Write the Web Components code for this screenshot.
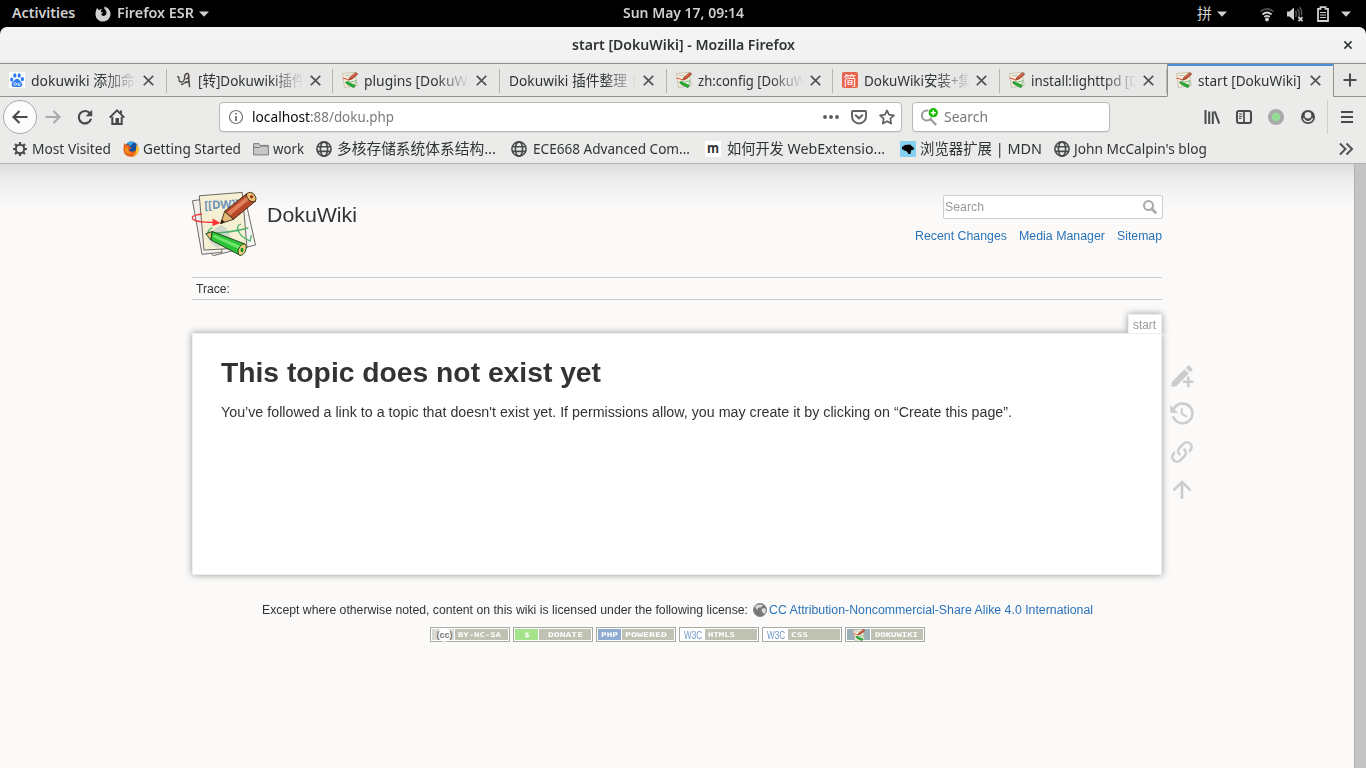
<!DOCTYPE html>
<html lang="en">
<head>
<meta charset="utf-8">
<title>start [DokuWiki]</title>
<style>
html,body{margin:0;height:100%;overflow:hidden;background:#000}
body{font-family:"Liberation Sans",Arial,sans-serif}
</style>
</head>
<body>
<desk-top></desk-top>

<template id="t-desktop">
<style>
:host{display:grid;grid-template-rows:27px 36px 34px 40px 27px 604px;width:1366px;height:768px;overflow:hidden}
</style>
<gnome-bar></gnome-bar>
<window-title></window-title>
<tab-strip></tab-strip>
<nav-bar></nav-bar>
<bookmark-bar></bookmark-bar>
<wiki-view></wiki-view>
</template>

<template id="t-gnome">
<style>
:host{display:grid;grid-template-columns:1fr auto 1fr;align-items:center;background:#000;color:#d0d0cf;font:600 14.2px/26px "Noto Sans","Noto Sans CJK SC",sans-serif}
div{display:flex;align-items:center;height:27px}
fit-text{margin-bottom:1px}
.l{padding-left:12px}.l ui-icon:first-of-type{margin:0 6px 0 20px}.l ui-icon:last-of-type{margin-left:5px}
.r{justify-content:flex-end;padding-right:15px}
.r fit-text{font-weight:400;font-size:15px}
</style>
<div class="l"><fit-text w="63">Activities</fit-text><ui-icon name="foxmono"></ui-icon><fit-text w="77">Firefox ESR</fit-text><ui-icon name="caret" w="10" h="6"></ui-icon></div>
<fit-text w="121">Sun May 17, 09:14</fit-text>
<div class="r"><fit-text w="15">拼</fit-text><ui-icon name="caret" w="10" h="6" style="margin:0 32px 0 5px"></ui-icon><ui-icon name="wifi"></ui-icon><ui-icon name="volume" style="margin:0 12px"></ui-icon><ui-icon name="battery"></ui-icon><ui-icon name="caret" w="10" h="6" style="margin-left:10px"></ui-icon></div>
</template>

<template id="t-title">
<style>
:host{display:grid;grid-template-columns:1fr auto 1fr;align-items:center;background:linear-gradient(#f4f4f4,#f2f2f1 33px,#e4e4e2);border-radius:7px 7px 0 0;color:#2e3436;font:600 14.4px/36px "Noto Sans",sans-serif}
ui-icon{justify-self:end;margin-right:14px}
</style>
<span></span><fit-text w="223">start [DokuWiki] - Mozilla Firefox</fit-text><ui-icon name="x" w="8" h="8" style="--sw:3.4"></ui-icon>
</template>

<template id="t-tabs">
<style>
:host{display:grid;grid-template-columns:repeat(8,166.67px) 1fr;box-sizing:border-box;height:34px;border-top:1px solid #8f918e;background:#e7e7e6}
.plus{display:flex;align-items:center;justify-content:center;border-bottom:1px solid #8f918e;border-left:1px solid #8f918e;color:#474b4c;margin-left:-.5px}
</style>
<browser-tab icon="baidu" w="104" label="dokuwiki 添加命"></browser-tab>
<browser-tab icon="scrawl" w="107.500" label="[转]Dokuwiki插件"></browser-tab>
<browser-tab icon="dokusmall" w="107" label="plugins [DokuWi"></browser-tab>
<browser-tab w="129" label="Dokuwiki 插件整理 |"></browser-tab>
<browser-tab icon="dokusmall" w="108" label="zh:config [DokuW"></browser-tab>
<browser-tab icon="jian" w="108" label="DokuWiki安装+集"></browser-tab>
<browser-tab icon="dokusmall" w="108" label="install:lighttpd [D"></browser-tab>
<browser-tab icon="dokusmall" w="103" label="start [DokuWiki]" active></browser-tab>
<div class="plus"><ui-icon name="plus"></ui-icon></div>
</template>

<template id="t-nav">
<style>
:host{display:flex;align-items:center;background:#ebebea;color:#474b4c;font:14.6px/26px "Noto Sans",sans-serif}
.b{display:flex;width:32px;height:32px;align-items:center;justify-content:center}
.back{box-sizing:border-box;width:34px;height:34px;border:1px solid #a8a9a7;border-radius:50%;background:#fcfcfc;margin:0 0 0 3px}
.f{display:flex;align-items:center;box-sizing:border-box;height:30px;background:#fff;border:1px solid #b8b8b5;border-radius:4px;box-shadow:0 1px 1px #0001}
.f fit-text{margin-bottom:2px}
.url{width:683px;margin-left:86px;padding:0 6px 0 8px}
.url fit-text:nth-of-type(1){color:#0c0c0d}.url fit-text:nth-of-type(2){color:#7b7b7c}
.q{width:198px;margin:0 86px 0 10px;padding-left:7px;color:#777}
.sep{width:1px;height:34px;background:#cecfcd;margin:0 3px}
</style>
<div class="b back"><ui-icon name="back"></ui-icon></div>
<div class="b" style="color:#a9aaaa"><ui-icon name="fwd"></ui-icon></div>
<div class="b"><ui-icon name="reload"></ui-icon></div>
<div class="b"><ui-icon name="home"></ui-icon></div>
<div class="f url"><ui-icon name="info" style="color:#737373;margin-right:8px"></ui-icon><fit-text w="58">localhost</fit-text><fit-text w="84">:88/doku.php</fit-text><span style="flex:1"></span><ui-icon name="dots"></ui-icon><ui-icon name="pocket" style="margin:0 12px"></ui-icon><ui-icon name="star"></ui-icon></div>
<div class="f q"><ui-icon name="searchadd" w="18" h="18" style="margin-right:6px"></ui-icon><fit-text w="44">Search</fit-text></div>
<div class="b"><ui-icon name="library"></ui-icon></div>
<div class="b"><ui-icon name="sidebar"></ui-icon></div>
<div class="b"><ui-icon name="dot"></ui-icon></div>
<div class="b"><ui-icon name="account"></ui-icon></div>
<div class="sep"></div>
<div class="b"><ui-icon name="menu"></ui-icon></div>
</template>

<template id="t-bookmarks">
<style>
:host{display:flex;align-items:center;box-sizing:border-box;height:27px;padding:0 12px 3px;background:#ebebea;border-bottom:1px solid #b4b5b2;color:#2e3436;font:14.67px/22px "Noto Sans","Noto Sans CJK SC",sans-serif}
.i{display:flex;align-items:center;gap:4px;margin-right:12px}
.i fit-text{margin-bottom:1px}
.n{gap:6px;margin-right:15px}
.i ui-icon{color:#474b4c}
</style>
<div class="i"><ui-icon name="gear"></ui-icon><fit-text w="79">Most Visited</fit-text></div>
<div class="i"><ui-icon name="firefox"></ui-icon><fit-text w="98">Getting Started</fit-text></div>
<div class="i"><ui-icon name="folder"></ui-icon><fit-text w="31">work</fit-text></div>
<div class="i n" style="gap:5px"><ui-icon name="globe"></ui-icon><fit-text w="159">多核存储系统体系结构...</fit-text></div>
<div class="i n"><ui-icon name="globe"></ui-icon><fit-text w="157">ECE668 Advanced Com...</fit-text></div>
<div class="i n"><ui-icon name="m"></ui-icon><fit-text w="158">如何开发 WebExtensio...</fit-text></div>
<div class="i"><ui-icon name="mdn"></ui-icon><fit-text w="122">浏览器扩展 | MDN</fit-text></div>
<div class="i"><ui-icon name="globe"></ui-icon><fit-text w="133">John McCalpin's blog</fit-text></div>
<span style="flex:1"></span><ui-icon name="more"></ui-icon>
</template>

<template id="t-wiki">
<style>
:host{display:grid;grid-template-columns:1354px 12px;background:#fbfaf9;color:#333}
main{background:linear-gradient(#ddd,#eee 17px,#fbfaf9 46px);padding:28px 192px 0;height:576px}
.bar{background:#c3c4c3;border-left:1px solid #aeb0ad}
header{display:flex;height:85px;justify-content:space-between}
.brand{display:flex;gap:11px;font-size:21px;line-height:46px}
.tools{display:flex;flex-direction:column;align-items:flex-end;font-size:12px}
.s{display:flex;align-items:center;justify-content:space-between;box-sizing:border-box;width:220px;height:24px;margin:3px -1px 0 0;padding:0 4px 0 1px;border:1px solid #ccc;border-radius:2px;background:#fff;color:#999;line-height:22px}
.links{display:flex;gap:12px;line-height:14px;margin-top:10px;color:#2b73b7}
.trace{box-sizing:border-box;height:23px;border:solid #ccc;border-width:1px 0;padding-left:4px;font-size:12px;line-height:22px}
.body{display:grid;grid-template-columns:970px 40px;margin-right:-60px}
.id{display:flex;justify-content:flex-end;height:19px;grid-column:1;overflow:hidden;padding:8px 8px 0;margin:6px -8px 0;position:relative;z-index:1}
.id div{width:32px;height:19px;border:1px solid #eee;border-bottom:0;background:#fff;box-shadow:0 0 7px #999;color:#999;font-size:12px;line-height:20px;text-align:right}
.id div fit-text{margin-right:5px}
article{box-sizing:border-box;height:242px;background:#fff;border:1px solid #eee;box-shadow:0 0 7px #999;padding:19px 28px}
h1{font-size:28px;line-height:40px;margin:0 0 9px}
p{font-size:14px;line-height:20px;margin:0}
nav{display:flex;flex-direction:column;align-items:center;gap:10px;padding-top:29px;color:#ccc}
footer{margin-top:27px;font-size:12px;line-height:16px}
.lic{display:flex;justify-content:center;height:16px;align-items:center}
.lic ui-icon{margin:0 1px 0 4px}
.lic fit-text:last-child{color:#2b73b7}
.bs{display:flex;gap:3px;justify-content:center;margin-top:9px;padding-left:1px}
</style>
<main>
<header>
 <div class="brand"><ui-icon name="doku" w="64" h="64"></ui-icon><fit-text w="90">DokuWiki</fit-text></div>
 <div class="tools"><div class="s"><fit-text w="39">Search</fit-text><ui-icon name="mag"></ui-icon></div>
 <div class="links"><fit-text w="92">Recent Changes</fit-text><fit-text w="86">Media Manager</fit-text><fit-text w="45">Sitemap</fit-text></div></div>
</header>
<div class="trace"><fit-text w="34">Trace:</fit-text></div>
<div class="body">
 <div class="id"><div><fit-text w="23">start</fit-text></div></div><span></span>
 <article><h1><fit-text w="380">This topic does not exist yet</fit-text></h1>
 <p><fit-text w="791">You’ve followed a link to a topic that doesn't exist yet. If permissions allow, you may create it by clicking on “Create this page”.</fit-text></p></article>
 <nav><ui-icon name="edit" w="28" h="28"></ui-icon><ui-icon name="history" w="28" h="28"></ui-icon><ui-icon name="link" w="28" h="28"></ui-icon><ui-icon name="up" w="28" h="28"></ui-icon></nav>
</div>
<footer>
 <div class="lic"><fit-text w="486">Except where otherwise noted, content on this wiki is licensed under the following license:</fit-text><ui-icon name="earth" style="margin-top:-1px"></ui-icon><fit-text w="324">CC Attribution-Noncommercial-Share Alike 4.0 International</fit-text></div>
 <div class="bs">
 <web-badge icon="cc" iw="23" lbg="#d8dbd3" x="28" tw="43" label="BY-NC-SA"></web-badge>
 <web-badge mark="$" iw="24" lbg="#a5e38a" x="35" tw="35" label="DONATE"></web-badge>
 <web-badge mark="PHP" iw="24" lbg="#8fabcf" x="29" tw="42" label="POWERED"></web-badge>
 <web-badge mark="W3C" w3 iw="24" lbg="#fff" x="29" tw="27" label="HTML5"></web-badge>
 <web-badge mark="W3C" w3 iw="24" lbg="#fff" x="29" tw="17" label="CSS"></web-badge>
 <web-badge icon="doku" iw="24" lbg="#9caeb8" x="30" tw="43" label="DOKUWIKI"></web-badge>
 </div>
</footer>
</main>
<div class="bar"></div>
</template>

<script>
const icons = {
caret:['0 0 10 6','<path d="M0 .5h10L5 5.7z" fill="currentColor"/>'],
x:['0 0 16 16','<path d="M2 2l12 12M14 2L2 14" stroke="currentColor" stroke-width="var(--sw,2.2)" stroke-linecap="square" fill="none" style="stroke-width:var(--sw,2.2)"/>'],
plus:['0 0 16 16','<path d="M8 1.500v13M1.500 8h13" stroke="currentColor" stroke-width="2"/>'],
foxmono:['0 0 16 16','<path d="M2 2l2 2.200C5 3.500 6 3 7.200 3 6.200 3.800 5.600 5 6 6.300h2.300L6.200 8.200C6.500 10 9.500 10.600 11 8.800 12.200 7 11.200 4 9.200 2.600L9.600.6C14 2 16.300 6 15.400 9.600 14.400 13.300 11.600 15.600 8 15.600 3.600 15.600.4 12.200.5 8 .5 6 1 3.800 2 2z" fill="currentColor"/>'],
wifi:['0 0 16 16','<g fill="none" stroke="currentColor" stroke-width="1.8"><path d="M1.500 5.500Q8 .5 14.500 5.500" opacity=".35"/><path d="M3.500 8.500Q8 4.500 12.500 8.500"/><path d="M5.300 11Q8 8.800 10.700 11"/></g><circle cx="8" cy="13.500" r="1.900" fill="currentColor"/>'],
volume:['0 0 16 16','<path d="M0 5.500h2.500L7 1.500v13l-4.500-4H0z" fill="currentColor"/><g fill="none" stroke="currentColor" stroke-width="1.500" opacity=".4"><path d="M8.500 5q2 3 0 6M10.500 3q3.500 5 .5 9M12.500 1.200Q15.500 5 14.500 9.500"/></g><path d="M11.500 11.200l4 4M15.500 11.200l-4 4" stroke="currentColor" stroke-width="1.800"/>'],
battery:['0 0 16 16','<path d="M5.500 1.200h5v1.600h2.500V15H3V2.800h2.500z" fill="none" stroke="currentColor" stroke-width="1.800"/><path d="M5 6.500h6M5 9h6M5 11.500h6" stroke="currentColor" stroke-width="1.200"/>'],
back:['0 0 16 16','<path d="M15.500 8H1.500M7.500 2l-6 6 6 6" fill="none" stroke="currentColor" stroke-width="2.100"/>'],
fwd:['0 0 16 16','<path d="M.5 8h14M8.500 2l6 6-6 6" fill="none" stroke="currentColor" stroke-width="2.100"/>'],
reload:['0 0 16 16','<path d="M13 4.500A6.200 6.200 0 1 0 14 9.800" fill="none" stroke="currentColor" stroke-width="2.200"/><path d="M15.200.8v6.400H8.700z" fill="currentColor"/>'],
home:['0 0 16 16','<path d="M.7 8.600L8 1.400l7.300 7.200" fill="none" stroke="currentColor" stroke-width="2"/><path d="M3.300 7.800V15h9.400V7.800" fill="none" stroke="currentColor" stroke-width="2"/><path d="M6.500 9h3.500v6H6.500zM11 1.500h2V5h-2z" fill="currentColor"/>'],
info:['0 0 16 16','<circle cx="8" cy="8" r="6.500" fill="none" stroke="currentColor" stroke-width="1.200"/><path d="M8 7v5M8 4v1.600" stroke="currentColor" stroke-width="1.900"/>'],
dots:['0 0 16 16','<g fill="#5b5b5b"><circle cx="2" cy="8" r="1.900"/><circle cx="8" cy="8" r="1.900"/><circle cx="14" cy="8" r="1.900"/></g>'],
pocket:['0 0 16 16','<path d="M1.800 2h12.400q.8 0 .8.800V7.500a7 7 0 0 1-14 0V2.800q0-.8.800-.8z" fill="none" stroke="#606060" stroke-width="1.900"/><path d="M4.700 6.300L8 9.300l3.300-3" fill="none" stroke="#606060" stroke-width="2" stroke-linecap="round"/>'],
star:['0 0 16 16','<path d="M8 1.400l2 4.300 4.900.6-3.600 3.300.9 5L8 12.200l-4.200 2.400.9-5L1.100 6.300 6 5.700z" fill="none" stroke="#606060" stroke-width="1.700" stroke-linejoin="round"/>'],
searchadd:['0 0 18 18','<circle cx="6.800" cy="7.500" r="4.900" fill="none" stroke="#999" stroke-width="2"/><path d="M10.300 11l5.900 6" stroke="#999" stroke-width="2.300"/><circle cx="13.300" cy="4.700" r="5.300" fill="#fff"/><circle cx="13.300" cy="4.700" r="4.600" fill="#12bc00"/><path d="M13.300 2.200v5M10.800 4.700h5" stroke="#fff" stroke-width="1.500"/>'],
library:['0 0 16 16','<path d="M1.500 1v14M5.200 2.500V15M8.800 2.500V15M10.700 2.300L15.200 14.600" stroke="currentColor" stroke-width="2"/>'],
sidebar:['0 0 16 16','<rect x="1" y="2" width="14" height="12" rx="2" fill="none" stroke="currentColor" stroke-width="2"/><path d="M8 2v12" stroke="currentColor" stroke-width="1.700"/><path d="M3 5h3.300M3 7.200h3.300M3 9.400h2.300" stroke="currentColor" stroke-width="1.100"/>'],
dot:['0 0 16 16','<circle cx="8" cy="8" r="8" fill="#a9a9a9"/><circle cx="8" cy="8" r="4.300" fill="#94dc94"/>'],
account:['0 0 16 16','<circle cx="8" cy="8" r="7" fill="currentColor"/><circle cx="8" cy="6.300" r="3.300" fill="#ebebea"/><path d="M3.500 9.300q1 3.300 4.500 3.300t4.500-3.300" stroke="#ebebea" stroke-width="1.400" fill="none"/>'],
menu:['0 0 16 16','<path d="M2 3h12M2 8h12M2 13h12" stroke="currentColor" stroke-width="2"/>'],
gear:['0 0 16 16','<circle cx="8" cy="8" r="4.200" fill="none" stroke="currentColor" stroke-width="2"/><path d="M8 1v2.500M8 12.500V15M1 8h2.500M12.500 8H15M3.050 3.050l1.800 1.800M11.150 11.150l1.800 1.800M3.050 12.950l1.800-1.800M11.150 4.850l1.800-1.800" stroke="currentColor" stroke-width="2.200"/>'],
firefox:['0 0 16 16','<circle cx="8.600" cy="7" r="6.500" fill="#174f9c"/><path d="M4 2Q8-.8 12 2 9 2 8 5z" fill="#35a5e5"/><path d="M1.500 2l1.700 1.800L7 4 6 6l3 .6L6 8.500Q7 11.300 10.500 10.500 14.500 9.500 13.500 3.500 17 8 14.700 11.900 12 16 7.800 15.800 1 15.300.4 9 .3 4.500 1.500 2z" fill="#e8641b"/><path d="M13.500 3.500q3.800 4.500 1 8.500-2 2.600-5 3.200 4-3.200 3.500-5.700z" fill="#ffc62e"/><path d="M2 6l3 1q-.5 4 3.500 5.500Q3 14 2 9z" fill="#f58e20"/>'],
folder:['0 0 16 16','<path d="M.6 13.900V2.600h5.500l1.200 1.800h8.100v9.500z" fill="#c6c8c6" stroke="#7a7d7c"/><path d="M1 6.500h5.500l1.500-1.400h7" fill="none" stroke="#7a7d7c"/>'],
globe:['0 0 16 16','<g fill="none" stroke="currentColor" stroke-width="1.600"><circle cx="8" cy="8" r="7.100"/><ellipse cx="8" cy="8" rx="3.600" ry="7.100"/><path d="M1.500 5.700h13M1.500 10.400h13"/></g>'],
m:['0 0 16 16','<path d="M0 0h16v16H0z" fill="#fff"/><text x="8" y="12" text-anchor="middle" font-family="Noto Sans" font-weight="700" font-size="14" textLength="12" lengthAdjust="spacingAndGlyphs" fill="#333">m</text>'],
mdn:['0 0 16 16','<path d="M0 0h16v16H0z" fill="#83d0f2"/><path d="M2 6l3-2 5-.5 4 3.500v1.500L11 9.500l-.5 3.500H8.500L7 10.500 4.500 9.500 2 8z" fill="#000"/>'],
more:['0 0 16 16','<path d="M2 2.500L7.500 8 2 13.500M8.500 2.500L14 8l-5.500 5.500" fill="none" stroke="#505455" stroke-width="2"/>'],
baidu:['0 0 16 16','<path d="M0 0h16v16H0z" fill="#fff"/><g fill="#2f7df6"><ellipse cx="2.700" cy="7.700" rx="1.600" ry="2.100"/><ellipse cx="5.800" cy="3.500" rx="1.600" ry="2.200"/><ellipse cx="10.200" cy="3.500" rx="1.600" ry="2.200"/><ellipse cx="13.400" cy="7.200" rx="1.600" ry="2.100"/><path d="M8 6.800c1.800 0 2.500 1.800 4 3 2 1.600 1.800 5.200-1 5.200H5C2.200 15 2 11.400 4 9.800 5.500 8.600 6.200 6.800 8 6.800z"/></g><circle cx="6.200" cy="12" r="1.300" fill="none" stroke="#fff" stroke-width=".8"/><path d="M9 10.700v2.600h2v-2.600" fill="none" stroke="#fff" stroke-width=".8"/>'],
scrawl:['0 0 16 16','<g fill="none" stroke="#4c4744"><path d="M1 4.800Q3.500 4 3 7q-.3 3 2.300 3 3 0 3.200-4.500Q8.600 2 11 1.500q2-.2 1.700 2.500-.4 3-3.200 3" stroke-width="1.300"/><path d="M12.500 3l1 12.300M13 10q-2.500-.5-4.500 1T5 12.500" stroke-width="1.500"/></g>'],
jian:['0 0 16 16','<rect width="16" height="16" rx="2" fill="#e8634d"/><text x="8" y="12.700" text-anchor="middle" font-family="Noto Sans CJK SC" font-size="13" fill="#fff">简</text>'],
mag:['0 0 16 16','<circle cx="6.500" cy="6.500" r="4.500" fill="none" stroke="#aaa" stroke-width="2"/><path d="M9.800 9.800l3.600 3.600" stroke="#aaa" stroke-width="2.800" stroke-linecap="round"/>'],
edit:['0 0 24 24','<path d="M3 17.250V21h3.750L14.500 13.250 17.800 9.940 14.060 6.190zM20.710 7.040c.39-.39.39-1.040 0-1.410l-2.340-2.340c-.37-.39-1.020-.39-1.410 0l-1.840 1.830 3.750 3.750z" fill="currentColor"/><path d="M17.300 12.800v8M12.500 17h8" stroke="#fbfaf9" stroke-width="4"/><path d="M17.300 12.500v9M12.800 17h9" stroke="currentColor" stroke-width="2.200"/>'],
history:['0 0 24 24','<path d="M11 7v5.110l4.710 2.790.79-1.280-4-2.370V7zm1.500-5C8.970 2 5.910 3.920 4.270 6.770L2 4.500V11h6.500L5.750 8.250C6.960 5.730 9.500 4 12.500 4a7.500 7.500 0 1 1 0 15c-3.270 0-6.030-2.090-7.060-5h-2.100c1.100 4.030 4.770 7 9.160 7a9.500 9.500 0 0 0 0-19z" fill="currentColor" stroke="currentColor" stroke-width=".15"/>'],
link:['0 0 24 24','<path d="M10.590 13.410c.41.390.41 1.030 0 1.420-.39.390-1.030.390-1.420 0a5.003 5.003 0 0 1 0-7.070l3.540-3.540a5.003 5.003 0 0 1 7.070 0 5.003 5.003 0 0 1 0 7.070l-1.490 1.490c.010-.82-.120-1.640-.400-2.420l.470-.480a2.982 2.982 0 0 0 0-4.240 2.982 2.982 0 0 0-4.240 0l-3.530 3.530a2.982 2.982 0 0 0 0 4.240m2.820-4.240c.390-.390 1.030-.390 1.420 0a5.003 5.003 0 0 1 0 7.070l-3.540 3.540a5.003 5.003 0 0 1-7.070 0 5.003 5.003 0 0 1 0-7.070l1.490-1.490c-.010.820.120 1.640.400 2.430l-.470.470a2.982 2.982 0 0 0 0 4.240 2.982 2.982 0 0 0 4.240 0l3.530-3.530a2.982 2.982 0 0 0 0-4.240.973.973 0 0 1 0-1.420z" fill="currentColor" stroke="currentColor" stroke-width=".2"/>'],
up:['0 0 24 24','<path d="M13 19.500h-2V7.500L5.500 13l-1.420-1.420L12 3.660l7.920 7.920L18.500 13 13 7.500z" fill="currentColor" stroke="currentColor" stroke-width=".2"/>'],
earth:['0 0 16 16','<circle cx="8" cy="8" r="6.500" fill="#777" stroke="#8a8a8a"/><path d="M3 4.500Q5 2.500 8 2.500l3 .5-2 2.500H6.500L5 8zM9.500 7l3.500-1 1 2.500-1.500 3.500L10 10z" fill="#dcdcdc"/>'],
cc:['0 0 23 12','<circle cx="12.500" cy="6" r="6.700" fill="#fff"/><text x="12.500" y="9" text-anchor="middle" font-family="Liberation Sans" font-weight="700" font-size="9.500" fill="#777" textLength="16" lengthAdjust="spacingAndGlyphs">(cc)</text>'],
dokusmall:['0 0 16 16','<path d="M.5 1.500L13 .5l2.300 13L2.500 15.500z" fill="#f4eed9" stroke="#b9b39f" stroke-width=".7"/><path d="M3 3.500h5" stroke="#b9c4c8"/><path d="M.5 6.500Q2 5.500 6.500 8" fill="none" stroke="#f0564a" stroke-width="1.200"/><path d="M4 9.500q5 1.500 10-1l-1 4" fill="none" stroke="#7fc796"/><path d="M6.500 8.200L8 5l5.800-4.500L15.800 2l-5.500 5z" fill="#c8472b" stroke="#60301f" stroke-width=".5"/><path d="M8.500 5.500L14 1.500" stroke="#ea9270" stroke-width=".8"/><path d="M3.500 10l2 0 7.800 3.200-1.300 2.600L5 12.300z" fill="#20b32f" stroke="#1c6424" stroke-width=".5"/>'],
doku:['0 0 64 64',`<g stroke="#5d5a54" stroke-width=".9" stroke-linejoin="round">
<path d="M20 62.500l1.300 1.200L63.500 53 55 15 20 20z" fill="#f7f5f3"/>
<path d="M.5 8.800L10 62.300l20-2L25 5z" fill="#f4eeee"/>
<path d="M7.300 3.800L50.300.4 55 55.700 12 58z" fill="#f5f0d4"/></g>
<path d="M15 44q5-6 14-11 8 2 9 14l-12 9q-9-4-11-12z" fill="#9db2bd" opacity=".4"/>
<text x="12.500" y="17.500" transform="rotate(-3 12 18)" font-family="Noto Sans" font-weight="700" font-size="11.500" fill="#6e93bb" textLength="35" lengthAdjust="spacingAndGlyphs">[[DW]]</text>
<path d="M10 22Q-2 23.500 .800 27q3 3.500 22 3.300" fill="none" stroke="#f03a3a" stroke-width="1.300"/><path d="M20.500 26.500l8 4.500-8 3z" fill="#f33"/>
<path d="M20.300 35.500q-4 2-5 6 22-.5 41-5.500M49 32q-5 2-3 6 2 5 5 7t7 4M52 46l6 3 1.500-6" fill="none" stroke="#4eb36e" stroke-width="1.300"/>
<g stroke="#392514" stroke-width=".9" stroke-linejoin="round"><path d="M28.700 31.500l4-12.200 8.800 8z" fill="#e2b875"/><path d="M32.700 19.300L54.500 1.800l9 7.300L41.500 27.300z" fill="#b94829"/><path d="M35 20.500L56 3.600l3 2.600L38 23.500z" fill="#dc7f5a" stroke="none"/><path d="M54.500 1.800q4-3 7.500.4 3.300 4 1.500 7-4 1.500-6.500-1-3-3-2.500-6.400z" fill="#edc270"/><circle cx="59.500" cy="4.800" r="1.600" fill="#9a2a1b" stroke="none"/><path d="M28.700 31.500l1.200-3.500 2.500 2z" fill="#23190f"/></g>
<g stroke="#183b16" stroke-width=".9" stroke-linejoin="round"><path d="M13.800 41.800l6.400-2.300L19 48z" fill="#e4bf78"/><path d="M20.200 39.500L53 52l-4.500 11.500L19 48z" fill="#2cc437"/><path d="M21.500 42.500L50 54.500l-1 3.500L21 45z" fill="#6fe56c" stroke="none"/><path d="M53 52q2.500 3-.3 8.500-3.500 4.500-6.200 2-1.500-4 1-7.500 3-4 5.500-3z" fill="#edd17f"/><ellipse cx="50" cy="58" rx="1.500" ry="2.200" fill="#178d27" stroke="none"/></g>`]
};

/* Clones the named template into an open root. */
function fromTemplate(tag, id){
  customElements.define(tag, class extends HTMLElement{
    constructor(){ super(); this.attachShadow({mode:'open'}).append(document.getElementById(id).content.cloneNode(true)); }
  });
}
[['desk-top','t-desktop'],['gnome-bar','t-gnome'],['window-title','t-title'],['tab-strip','t-tabs'],['nav-bar','t-nav'],['bookmark-bar','t-bookmarks'],['wiki-view','t-wiki']].forEach(a=>fromTemplate(...a));

customElements.define('ui-icon', class extends HTMLElement{
  connectedCallback(){
    if(this.shadowRoot) return;
    const [vb,body]=icons[this.getAttribute('name')];
    const w=this.getAttribute('w')||16,h=this.getAttribute('h')||16;
    this.attachShadow({mode:'open'}).innerHTML=`<style>:host{display:block;flex:none;width:${w}px;height:${h}px}svg{display:block;overflow:visible}</style><svg width="${w}" height="${h}" viewBox="${vb}">${body}</svg>`;
  }
});

customElements.define('browser-tab', class extends HTMLElement{
  connectedCallback(){
    if(this.shadowRoot) return;
    const icon=this.getAttribute('icon'), active=this.hasAttribute('active');
    this.attachShadow({mode:'open'}).innerHTML=`<style>
:host{display:flex;align-items:center;box-sizing:border-box;height:33px;padding:0 12.500px 0 9px;color:#2e3436;font:14.67px/32px "Noto Sans","Noto Sans CJK SC",sans-serif;border-bottom:1px solid #8f918e;background:linear-gradient(#b4b5b3,#b4b5b3) right 5px/1px 24px no-repeat}
:host([active]){background:#ebebea;border-bottom-color:#ebebea;box-shadow:inset 0 2px #4a90d9;border-left:1px solid #8f918e;padding-left:8.500px}
.t{flex:1;white-space:nowrap;${active?'':'-webkit-mask-image:linear-gradient(90deg,#000 calc(100% - 36px),#0000 calc(100% - 2px))'}}
.i{margin-right:6px}.c{margin-left:4px;color:#505455}</style>
${icon?`<ui-icon class="i" name="${icon}"></ui-icon>`:''}<div class="t"><fit-text w="${this.getAttribute('w')}">${this.getAttribute('label')}</fit-text></div><ui-icon class="c" name="x" w="11" h="11" style="--sw:2.5"></ui-icon>`;
  }
});

customElements.define('web-badge', class extends HTMLElement{
  connectedCallback(){
    if(this.shadowRoot) return;
    const g=n=>this.getAttribute(n), w3=this.hasAttribute('w3'), iw=+g('iw');
    const left=g('icon')==='doku'?'<ui-icon name="dokusmall" w="14" h="12"></ui-icon>':g('icon')?'<ui-icon name="cc" w="23" h="12"></ui-icon>':
      `<fit-text class="${w3?'w3':''}" w="${w3?18:g('mark').length*6-(g('mark').length>1?1:0)}">${g('mark')}</fit-text>`;
    this.attachShadow({mode:'open'}).innerHTML=`<style>
:host{display:flex;box-sizing:border-box;width:80px;height:15px;border:1px solid #a7a9a3;padding:1px;background:#fff;font:700 6.5px/12px "DejaVu Sans Mono",monospace;color:#fff}
.a{width:${iw-1}px;height:11px;background:${g('lbg')};display:flex;justify-content:center;align-items:center}
.b{flex:1;height:11px;margin-left:1px;background:#bfc2b2;padding-left:${g('x')-iw-2}px}
.w3{font:400 11px/12px "Liberation Sans";color:#6f95c6}</style><div class="a">${left}</div><div class="b"><fit-text w="${g('tw')}">${g('label')}</fit-text></div>`;
  }
});

/* A run of text stretched or narrowed to exactly w pixels; defined last so that its surroundings are styled when it measures. */
customElements.define('fit-text', class extends HTMLElement{
  connectedCallback(){
    if(this.shadowRoot) return;
    const w=+this.getAttribute('w');
    this.attachShadow({mode:'open'}).innerHTML=`<style>:host{display:inline-block;flex:none;width:${w}px;white-space:pre;vertical-align:top}span{display:inline-block;transform-origin:0 50%;vertical-align:top}</style><span><slot></slot></span>`;
    const s=this.shadowRoot.querySelector('span');
    const n=s.getBoundingClientRect().width;
    if(n && Math.abs(n-w)>.3) s.style.transform=`scaleX(${w/n})`;
  }
});
</script>
</body>
</html>
